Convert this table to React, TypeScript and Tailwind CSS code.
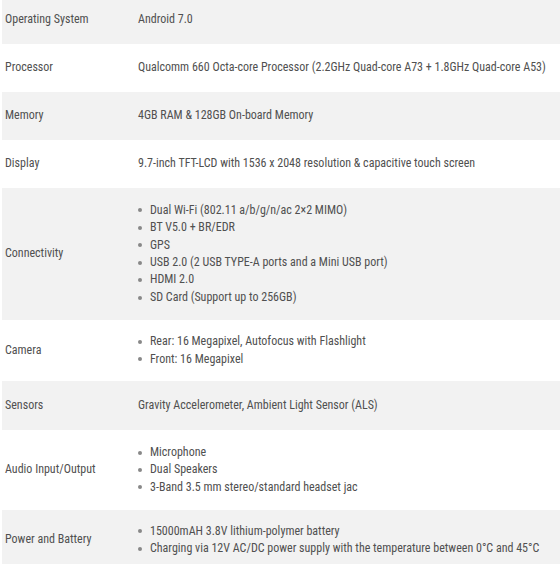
import React from 'react';

type Spec = { label: string; value?: string; items?: string[]; h: string };

const specs: Spec[] = [
  { label: 'Operating System', value: 'Android 7.0', h: 'h-[48px]' },
  { label: 'Processor', value: 'Qualcomm 660 Octa-core Processor (2.2GHz Quad-core A73 + 1.8GHz Quad-core A53)', h: 'h-[48px]' },
  { label: 'Memory', value: '4GB RAM & 128GB On-board Memory', h: 'h-[48px]' },
  { label: 'Display', value: '9.7-inch TFT-LCD with 1536 x 2048 resolution & capacitive touch screen', h: 'h-[48px]' },
  {
    label: 'Connectivity',
    items: [
      'Dual Wi-Fi (802.11 a/b/g/n/ac 2×2 MIMO)',
      'BT V5.0 + BR/EDR',
      'GPS',
      'USB 2.0 (2 USB TYPE-A ports and a Mini USB port)',
      'HDMI 2.0',
      'SD Card (Support up to 256GB)',
    ],
    h: 'h-[132px]',
  },
  { label: 'Camera', items: ['Rear: 16 Megapixel, Autofocus with Flashlight', 'Front: 16 Megapixel'], h: 'h-[61px]' },
  { label: 'Sensors', value: 'Gravity Accelerometer, Ambient Light Sensor (ALS)', h: 'h-[49px]' },
  { label: 'Audio Input/Output', items: ['Microphone', 'Dual Speakers', '3-Band 3.5 mm stereo/standard headset jac'], h: 'h-[80px]' },
  {
    label: 'Power and Battery',
    items: ['15000mAH 3.8V lithium-polymer battery', 'Charging via 12V AC/DC power supply with the temperature between 0°C and 45°C'],
    h: 'h-[60px]',
  },
];

export default function App() {
  return (
    <div className="w-[560px] h-[564px] overflow-hidden bg-white">
      <div
        className="-mt-[4px] pl-[2px] text-[12px] leading-[17.4px] text-[#505050] font-stretch-condensed"
        style={{ fontFamily: 'Roboto, "Liberation Sans", sans-serif' }}
      >
        {specs.map((s, i) => (
          <div key={s.label} className={`flex items-center ${s.h} ${i % 2 === 0 ? 'bg-[#f2f2f2]' : 'bg-white'}`}>
            <div className="w-[136px] shrink-0 pl-[3px]">{s.label}</div>
            <div className="flex-1 whitespace-nowrap">
              {s.value}
              {s.items && (
                <ul>
                  {s.items.map((it) => (
                    <li key={it} className="flex items-center">
                      <span className="w-[4px] h-[4px] rounded-full bg-[#888] mr-[8px]" />
                      {it}
                    </li>
                  ))}
                </ul>
              )}
            </div>
          </div>
        ))}
      </div>
    </div>
  );
}
